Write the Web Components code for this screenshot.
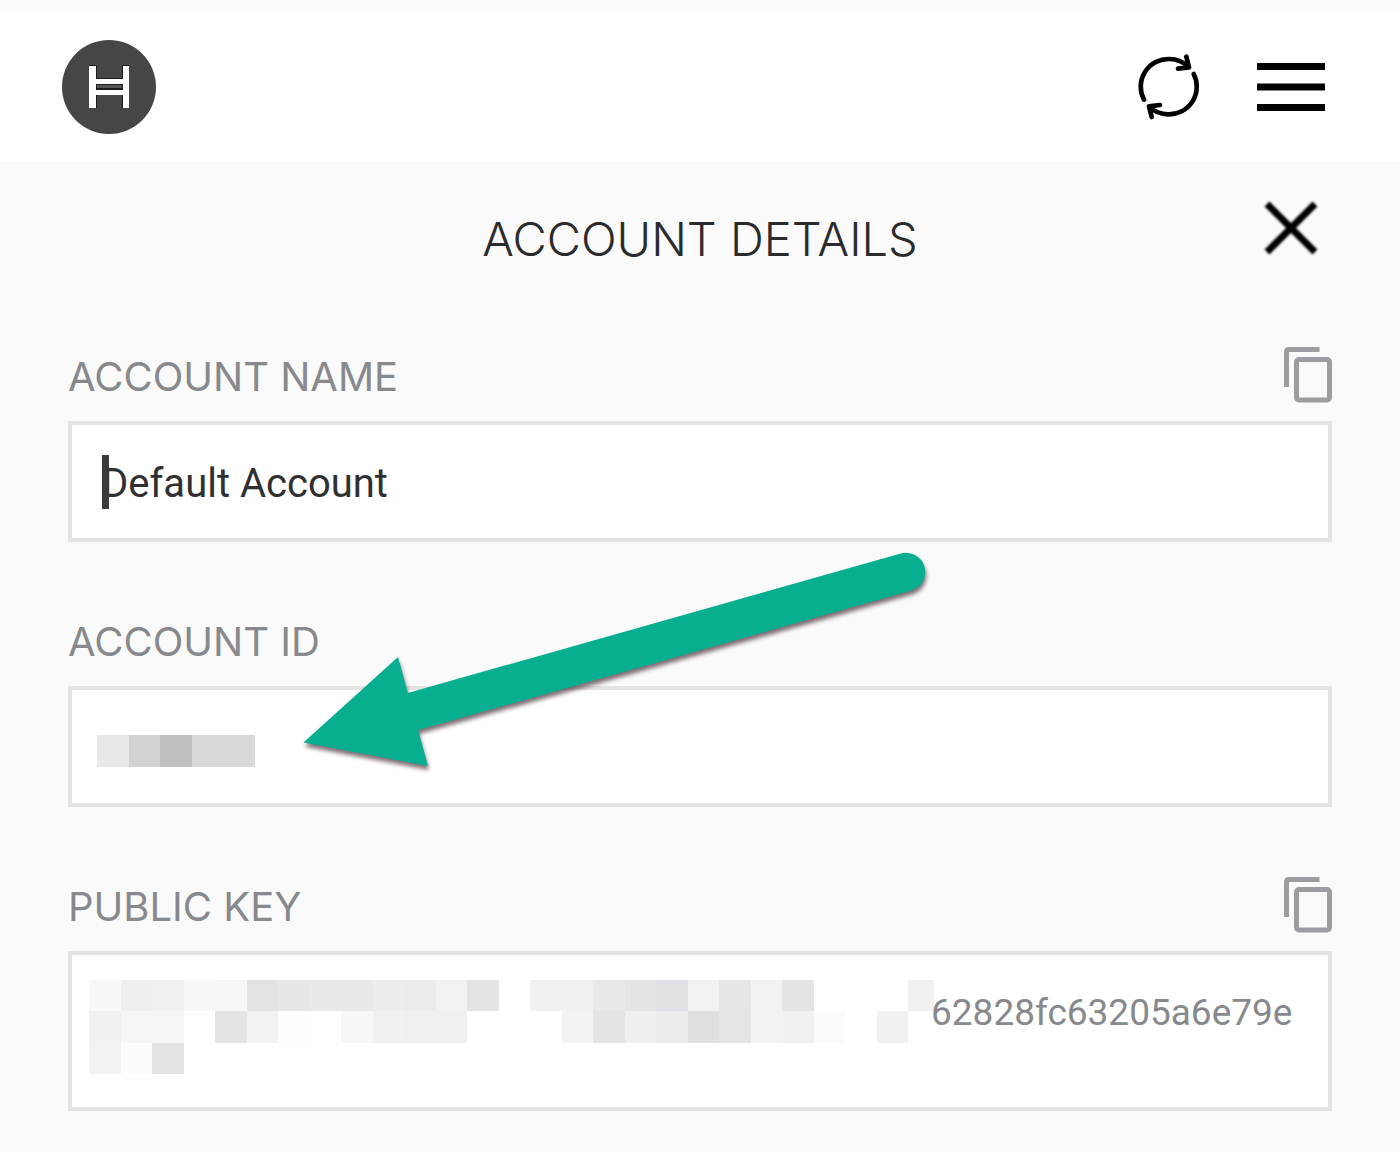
<!DOCTYPE html>
<html lang="en">
<head>
<meta charset="utf-8">
<meta name="viewport" content="width=device-width, initial-scale=1">
<title>Account Details</title>
<style>
  body { margin: 0; background: #fafafa; font-family: Roboto, "Liberation Sans", sans-serif; }
</style>
</head>
<body>
<wallet-app></wallet-app>
<script>
const define = (name, html, setup) => {
  const template = document.createElement('template');
  template.innerHTML = html;
  customElements.define(name, class extends HTMLElement {
    constructor() {
      super();
      this.attachShadow({ mode: 'open' }).append(template.content.cloneNode(true));
    }
    connectedCallback() { if (setup) setup(this, this.shadowRoot); }
  });
};

define('hedera-logo', `
<style>:host{display:block;width:94px;height:94px} svg{display:block}</style>
<svg width="94" height="94" viewBox="0 0 94 94" role="img" aria-label="Hedera">
  <circle cx="47" cy="47" r="47" fill="#464646"/>
  <path fill="#1c1c1c" d="M27 25h8v43h-8zM60 25h7v43h-7zM34 38h27v17H34z"/>
  <path fill="#555" d="M35 45h25v3H35z"/>
  <path fill="#fff" d="M27 26h7v13h27V26h6v42h-6V55H34v13h-7zM34 44v6h27v-6z" fill-rule="evenodd"/>
</svg>`);

define('app-header', `
<style>
  :host{display:block;background:#fff;margin-top:12px}
  header{display:flex;align-items:center;min-height:149px;padding:0 75px 0 62px;box-sizing:border-box}
  nav{display:flex;align-items:center;gap:57px;margin-left:auto}
  button{border:0;padding:0;background:none;cursor:pointer}
  svg{display:block}
</style>
<header>
  <hedera-logo></hedera-logo>
  <nav>
    <button type="button" aria-label="Refresh">
      <svg width="62" height="66" viewBox="54 67 186 198" fill="none" stroke="#000" stroke-width="14" stroke-linecap="round" stroke-linejoin="round">
        <path d="M72 204A83 83 0 0 1 147 82A83 83 0 0 1 207 107M199 75L207 107L174 111"/>
        <path d="M221 127A83 83 0 0 1 147 248A83 83 0 0 1 87 225M95 256L87 224L120 220"/>
      </svg>
    </button>
    <button type="button" aria-label="Menu">
      <svg width="68" height="48" viewBox="0 0 68 48"><path d="M0 0h68v7H0zM0 20.500h68v7H0zM0 41h68v7H0z"/></svg>
    </button>
  </nav>
</header>`);

define('panel-title', `
<style>
  :host{display:grid;grid-template-columns:1fr auto 1fr;align-items:start;padding:40px 82px 0}
  h1{grid-column:2;margin:12px 0 0;font:300 47px/52px Inter,"Open Sans",sans-serif;color:#2b2b2d}
  button{justify-self:end;border:0;padding:0;background:none;cursor:pointer}
  svg{display:block}
</style>
<h1><slot></slot></h1>
<button type="button" aria-label="Close">
  <svg width="54" height="54" viewBox="0 0 54 54" fill="none" stroke="#000" stroke-width="7" style="filter:blur(1px)"><path d="M3 3L51 51M51 3L3 51"/></svg>
</button>`);

define('copy-button', `
<style>
  :host{display:block}
  button{display:block;border:0;padding:0;background:none;cursor:pointer}
  svg{display:block}
</style>
<button type="button" aria-label="Copy">
  <svg width="48" height="56" viewBox="0 0 48 56" fill="none" stroke="#9c9da1" stroke-width="5">
    <path d="M35.500 2.500H5Q2.500 2.500 2.500 5V40"/><rect x="12.500" y="12.500" width="33" height="40.500" rx="2.500"/>
  </svg>
</button>`);

/* Blocks that hide private characters; each row lists "column:colour". */
define('redacted-blocks', `
<style>:host{display:block;flex:none} svg{display:block;overflow:visible}</style>
<svg aria-hidden="true" shape-rendering="crispEdges"></svg>`, (host, root) => {
  const svg = root.querySelector('svg');
  const size = 31.5;
  const rows = host.getAttribute('rows').split('|');
  svg.setAttribute('width', host.getAttribute('width'));
  svg.setAttribute('height', Math.round(rows.length * size));
  svg.innerHTML = rows.map((row, y) => row.trim().split(/\s+/).map(cell => {
    const [x, colour, w = size] = cell.split(':');
    const top = Math.floor(y * size);
    const height = rows.length > 1 ? Math.floor((y + 1) * size) - top : 32;
    return `<rect x="${x * size}" y="${top}" width="${w}" height="${height}" fill="#${colour}"/>`;
  }).join('')).join('');
});

define('account-field', `
<style>
  :host{display:block}
  .head{display:flex;align-items:center;justify-content:space-between;min-height:56px;margin-bottom:18px}
  label{padding-top:4px;font:400 40px/48px Inter,"Open Sans",sans-serif;color:#88898d}
  copy-button[hidden]{display:none}
  .box{position:relative;display:flex;align-items:center;min-height:121px;box-sizing:border-box;border:4px solid #e3e3e3;background:#fff}
  :host([multiline]) .box{min-height:160px;align-items:flex-start;padding-top:25px}
  input,textarea{flex:1;min-width:0;box-sizing:border-box;margin:0;border:0;padding:4px 0 0 30px;background:none;outline:0;resize:none;overflow:hidden;font:400 40px/54px Roboto,sans-serif;color:#303032}
  input{height:58px}
  textarea{height:64px;padding:6px 0 0;font-size:37px;color:#88898d}
  .caret{position:absolute;left:30px;top:50%;margin-top:-27px;width:7px;height:54px;background:#3b3b3d}
</style>
<div class="head"><label for="field"></label><copy-button></copy-button></div>
<div class="box"><slot></slot></div>`, (host, root) => {
  root.querySelector('label').textContent = host.getAttribute('label');
  root.querySelector('copy-button').hidden = !host.hasAttribute('copy');
  const multiline = host.hasAttribute('multiline');
  const control = document.createElement(multiline ? 'textarea' : 'input');
  control.id = 'field';
  control.spellcheck = false;
  control.readOnly = host.hasAttribute('readonly');
  control.value = host.getAttribute('value') || '';
  const box = root.querySelector('.box');
  box.append(control);
  if (host.hasAttribute('active')) {
    const caret = document.createElement('span');
    caret.className = 'caret';
    box.append(caret);
  }
});

define('pointer-arrow', `
<style>:host{position:absolute;left:300px;top:200px;pointer-events:none} svg{display:block;overflow:visible;filter:drop-shadow(1px 4px 2px rgba(40,15,25,.6))}</style>
<svg width="630" height="225" viewBox="300 547 630 225" aria-hidden="true">
  <path d="M906 572L413 711.500" stroke="#07ae90" stroke-width="38.500" stroke-linecap="round"/>
  <path d="M303.500 742.500L398 657L428 766z" fill="#07ae90"/>
</svg>`);

define('wallet-app', `
<style>
  :host{display:flow-root}
  main{display:block;padding-bottom:40px}
  .fields{position:relative;display:flex;flex-direction:column;gap:70px;margin-top:82px;padding:0 68px}
  account-field redacted-blocks{margin:8px 0 0 25px}
  account-field[multiline] redacted-blocks{margin:0 0 0 17px}
</style>
<app-header></app-header>
<main>
  <panel-title>ACCOUNT DETAILS</panel-title>
  <div class="fields">
    <account-field label="ACCOUNT NAME" value="Default Account" copy active></account-field>
    <account-field label="ACCOUNT ID" readonly>
      <redacted-blocks width="158" rows="0:e8e8e8 1:d2d2d2 2:c0c0c0 3:d9d9d9:63"></redacted-blocks>
    </account-field>
    <account-field label="PUBLIC KEY" value="62828fc63205a6e79e" copy multiline readonly>
      <redacted-blocks width="842" rows="0:f8f8f8 1:eef0ef 2:f0f0f0 3:f8f8f8 4:f6f6f6 5:e3e3e3 6:e7e7e7 7:e8eae9 8:e8eae9 9:ebedec 10:ebebeb 11:f1f3f2 12:e4e4e4 14:f1f1f1 15:f0f0f0 16:e9e9e9 17:e4e4e4 18:e0e1e4 19:f2f2f2 20:e6e6e6 21:f2f2f2 22:e4e4e4 26:f1f1f1:26|0:f0f2f1 1:f6f6f6 2:f5f5f5 4:e4e4e4 5:f2f4f3 6:fdfefe 8:f7f7f7 9:f0f2f1 10:f0f0f0 11:f0f0f0 15:f3f3f3 16:e4e4e4 17:efefef 18:ededed 19:dfe1e0 20:e4e6e5 21:f2f2f2 22:f0f2f1 23:fbfbfb 25:f1f1f1|0:f2f2f2 1:fcfcfc 2:e2e3e5"></redacted-blocks>
    </account-field>
    <pointer-arrow></pointer-arrow>
  </div>
</main>`);
</script>
</body>
</html>
